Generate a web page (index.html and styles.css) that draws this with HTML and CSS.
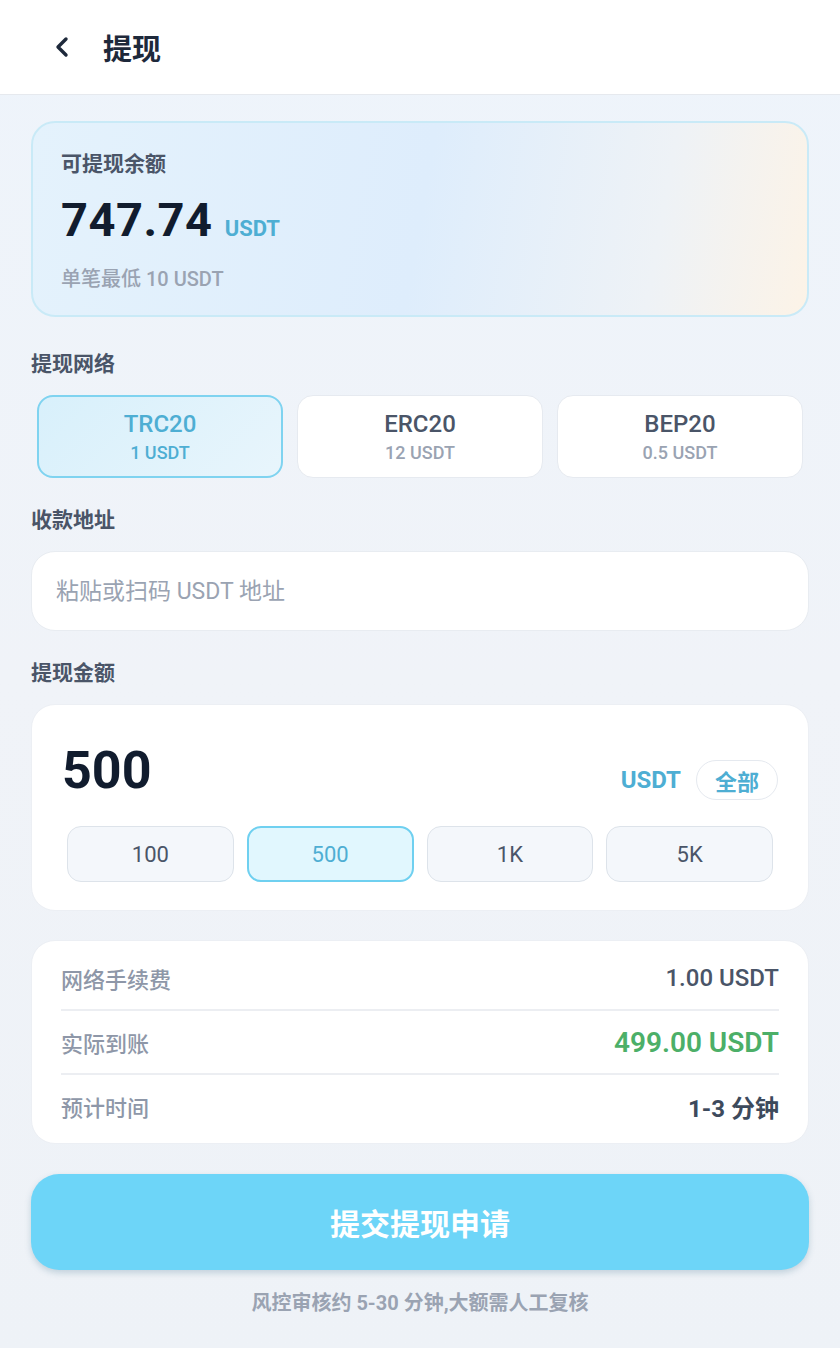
FILE: index.html
```html
<!DOCTYPE html>
<html lang="zh-CN">
<head>
  <meta charset="UTF-8" />
  <meta name="viewport" content="width=device-width, initial-scale=1.0" />
  <title>提现</title>
  <link rel="stylesheet" href="styles.css">
</head>
<body>
  <header class="topbar">
    <button class="back" aria-label="返回">
      <svg width="20" height="24" viewBox="0 0 20 24"><path d="M13 4 L5 12 L13 20" fill="none" stroke="#1e293b" stroke-width="3.4" stroke-linecap="round" stroke-linejoin="round"/></svg>
    </button>
    <h1>提现</h1>
  </header>

  <main class="page">
    <section class="balance-card">
      <div class="balance-label">可提现余额</div>
      <div class="balance-amount">747.74 <span class="unit">USDT</span></div>
      <div class="balance-min">单笔最低 10 USDT</div>
    </section>

    <div class="section-title first">提现网络</div>
    <div class="networks">
      <div class="network active">
        <div class="net-name">TRC20</div>
        <div class="net-fee">1 USDT</div>
      </div>
      <div class="network">
        <div class="net-name">ERC20</div>
        <div class="net-fee">12 USDT</div>
      </div>
      <div class="network">
        <div class="net-name">BEP20</div>
        <div class="net-fee">0.5 USDT</div>
      </div>
    </div>

    <div class="section-title">收款地址</div>
    <input class="address" type="text" placeholder="粘贴或扫码 USDT 地址" />

    <div class="section-title">提现金额</div>
    <section class="amount-card">
      <div class="amount-row">
        <div class="amount-value">500</div>
        <div class="amount-side">
          <span class="unit-lg">USDT</span>
          <button class="all-btn">全部</button>
        </div>
      </div>
      <div class="quick">
        <button class="chip">100</button>
        <button class="chip active">500</button>
        <button class="chip">1K</button>
        <button class="chip">5K</button>
      </div>
    </section>

    <section class="detail-card">
      <div class="detail-row">
        <span class="d-label">网络手续费</span>
        <span class="d-value">1.00 USDT</span>
      </div>
      <div class="detail-row">
        <span class="d-label">实际到账</span>
        <span class="d-value green">499.00 USDT</span>
      </div>
      <div class="detail-row">
        <span class="d-label">预计时间</span>
        <span class="d-value dark">1-3 分钟</span>
      </div>
    </section>

    <button class="submit">提交提现申请</button>
    <p class="note">风控审核约 5-30 分钟,大额需人工复核</p>
  </main>
</body>
</html>
```

FILE: styles.css
```css
* {
  box-sizing: border-box;
}
body {
  margin: 0;
  font-family: Roboto, "Noto Sans CJK SC", sans-serif;
  color: #1e293b;
  background: linear-gradient(180deg, #eef4fb 0%, #f0f3f8 50%, #eef2f7 100%);
  min-height: 1348px;
}
button {
  font-family: inherit;
  cursor: pointer;
}
.topbar {
  height: 95px;
  background: #ffffff;
  border-bottom: 1px solid #e6e9ee;
  display: flex;
  align-items: center;
  padding-left: 53px;
}
.back {
  border: none;
  background: none;
  padding: 0;
  width: 24px;
  height: 28px;
  display: flex;
  align-items: center;
}
.topbar h1 {
  margin: 0 0 0 26px;
  font-size: 29px;
  font-weight: 700;
  color: #1e293b;
}
.page {
  padding: 26px 31px 40px;
}
.balance-card {
  height: 196px;
  border: 2px solid #c9eaf7;
  border-radius: 24px;
  background: linear-gradient(100deg, #e4f2fc 0%, #deedfc 50%, #eef2f6 80%, #fcf3e7 100%);
  padding: 24px 28px 0;
}
.balance-label {
  font-size: 21px;
  font-weight: 700;
  color: #4a5568;
  line-height: 34px;
}
.balance-amount {
  font-size: 47px;
  font-weight: 700;
  color: #111c2e;
  line-height: 60px;
  margin-top: 9px;
  letter-spacing: 0.5px;
}
.unit {
  font-size: 22px;
  color: #4eaed3;
  letter-spacing: 0;
}
.balance-min {
  font-size: 20px;
  font-weight: 500;
  color: #9aa3b2;
  margin-top: 4px;
}
.section-title {
  font-size: 21px;
  font-weight: 700;
  color: #4a5568;
  line-height: 30px;
  margin: 27px 0 16px;
}
.section-title.first {
  margin: 32px 0 16px;
}
.networks {
  display: grid;
  grid-template-columns: repeat(3, 1fr);
  gap: 14px;
  padding: 0 6px;
}
.network {
  height: 83px;
  background: #ffffff;
  border: 1.5px solid #e6eaf0;
  border-radius: 16px;
  display: flex;
  flex-direction: column;
  align-items: center;
  justify-content: center;
}
.network.active {
  background: linear-gradient(135deg, #d8f0fb, #e8f5fc);
  border: 2px solid #7fd3f0;
}
.net-name {
  font-size: 24px;
  font-weight: 500;
  color: #4a5568;
  line-height: 28px;
}
.net-fee {
  font-size: 18px;
  font-weight: 500;
  color: #9aa3b2;
  margin-top: 4px;
}
.network.active .net-name,
.network.active .net-fee {
  color: #4eaed3;
}
.address {
  display: block;
  width: 100%;
  height: 80px;
  border: 1.5px solid #e8ecf1;
  border-radius: 24px;
  background: #ffffff;
  padding: 0 24px;
  font-family: inherit;
  font-size: 23px;
  color: #1e293b;
  outline: none;
}
.address::placeholder {
  color: #9aa3b2;
}
.amount-card {
  height: 207px;
  background: #ffffff;
  border: 1px solid #eceff4;
  border-radius: 24px;
  padding: 34px 30px 0;
}
.amount-row {
  display: flex;
  align-items: center;
  justify-content: space-between;
}
.amount-value {
  font-size: 52px;
  font-weight: 700;
  color: #111c2e;
  line-height: 64px;
}
.amount-side {
  display: flex;
  align-items: center;
  gap: 15px;
  margin-top: 18px;
}
.unit-lg {
  font-size: 24px;
  font-weight: 700;
  color: #4eaed3;
}
.all-btn {
  height: 40px;
  padding: 0 18px;
  border: 1.5px solid #e5e9ef;
  border-radius: 20px;
  background: #ffffff;
  font-size: 22px;
  font-weight: 700;
  color: #4eaed3;
}
.quick {
  display: grid;
  grid-template-columns: repeat(4, 1fr);
  gap: 13px;
  padding: 0 5px;
  margin-top: 23px;
}
.chip {
  height: 56px;
  background: #f4f7fb;
  border: 1.5px solid #dde3ea;
  border-radius: 14px;
  font-size: 22px;
  font-weight: 400;
  color: #4a5568;
}
.chip.active {
  background: #e1f7fe;
  border: 2px solid #6fd0f0;
  color: #4eaed3;
}
.detail-card {
  margin-top: 29px;
  background: #ffffff;
  border: 1px solid #eceff4;
  border-radius: 24px;
  padding: 6px 29px;
}
.detail-row {
  display: flex;
  justify-content: space-between;
  align-items: center;
  height: 64px;
  border-bottom: 2px solid #eceef2;
}
.detail-row:last-child {
  border-bottom: none;
  height: 62px;
}
.d-label {
  font-size: 22px;
  font-weight: 500;
  color: #8e97a8;
}
.d-value {
  font-size: 24px;
  font-weight: 500;
  color: #4a5568;
}
.d-value.green {
  font-size: 28px;
  font-weight: 600;
  color: #4caf68;
}
.d-value.dark {
  font-weight: 700;
  color: #3d4a5c;
}
.submit {
  display: block;
  width: 100%;
  height: 96px;
  margin-top: 30px;
  border: none;
  border-radius: 28px;
  background: #6dd5f8;
  box-shadow: 0 3px 6px rgba(60, 110, 140, 0.25);
  color: #ffffff;
  font-size: 30px;
  font-weight: 700;
}
.note {
  margin: 17px 0 0;
  text-align: center;
  font-size: 20px;
  font-weight: 700;
  color: #9aa3b2;
}
```
